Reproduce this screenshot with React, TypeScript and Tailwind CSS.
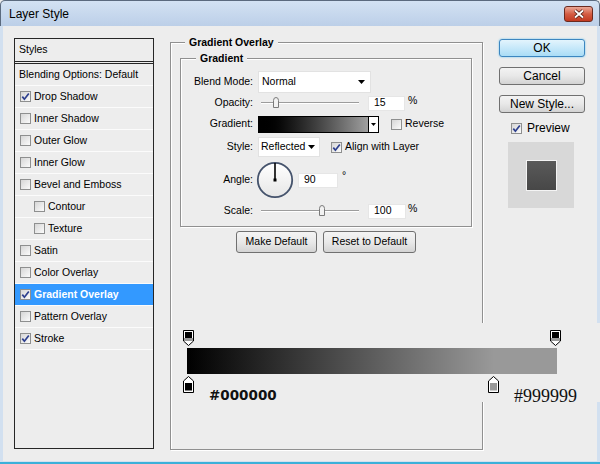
import React from "react"

type StyleItem = { name: string; on?: boolean; sub?: boolean; active?: boolean }

const styles: StyleItem[] = [
  { name: "Drop Shadow", on: true },
  { name: "Inner Shadow" },
  { name: "Outer Glow" },
  { name: "Inner Glow" },
  { name: "Bevel and Emboss" },
  { name: "Contour", sub: true },
  { name: "Texture", sub: true },
  { name: "Satin" },
  { name: "Color Overlay" },
  { name: "Gradient Overlay", on: true, active: true },
  { name: "Pattern Overlay" },
  { name: "Stroke", on: true },
]

const Check = ({ on }: { on?: boolean }) => (
  <span className="w-[11px] h-[11px] shrink-0 border border-[#8e8f8f] bg-gradient-to-br from-[#d6d6d6] to-[#fbfbfb] flex items-center justify-center">
    {on && (
      <svg width="9" height="9" viewBox="0 0 9 9">
        <path d="M1.3 4.6 L3.4 7.2 L7.8 1.4" fill="none" stroke="#2d3f8e" strokeWidth="1.7" />
      </svg>
    )}
  </span>
)

const Arrow = () => (
  <svg width="7" height="4" viewBox="0 0 7 4">
    <path d="M0 0 H7 L3.5 4 Z" fill="#000" />
  </svg>
)

const Thumb = () => (
  <svg width="8" height="11" viewBox="0 0 8 11">
    <path d="M1.5 10.5 V3.5 Q1.5 0.5 4 0.5 Q6.5 0.5 6.5 3.5 V10.5 Z" fill="#f2f2f2" stroke="#7a7a7a" />
  </svg>
)

const Slider = ({ at }: { at: number }) => (
  <div className="relative ml-[3px] w-[98px] h-[2px] border-t border-[#9c9c9c] bg-white">
    <div className="absolute top-[-6px]" style={{ left: at }}>
      <Thumb />
    </div>
  </div>
)

const Field = ({ value, w }: { value: string; w: string }) => (
  <div className={`${w} h-[15px] bg-white border border-[#e6e6e6] pl-[5px] flex items-center text-[10.5px]`}>{value}</div>
)

const Label = ({ children }: { children: React.ReactNode }) => (
  <div className="w-[72px] shrink-0 text-right pr-[0px] mr-[5px] text-[10.5px]">{children}</div>
)

const GrayButton = ({ children, w }: { children: React.ReactNode; w: string }) => (
  <div className={`${w} h-[22px] flex items-center justify-center rounded-[3px] border border-[#707070] bg-gradient-to-b from-[#f4f4f4] via-[#e9e9e9] to-[#d4d4d4] text-[10.5px]`}>
    {children}
  </div>
)

const BigButton = ({ children, focus }: { children: React.ReactNode; focus?: boolean }) => (
  <div
    className={
      focus
        ? "w-[86px] h-[18px] flex items-center justify-center rounded-[3px] border border-[#3c86c0] bg-gradient-to-b from-[#e3f4fd] to-[#a9dcf6] shadow-[0_0_2px_#5fc2f0] text-[12px]"
        : "w-[86px] h-[18px] flex items-center justify-center rounded-[3px] border border-[#707070] bg-gradient-to-b from-[#f3f3f3] via-[#e8e8e8] to-[#d3d3d3] text-[12px]"
    }
  >
    {children}
  </div>
)

const TopStop = () => (
  <svg width="11" height="16" viewBox="0 0 11 16">
    <path d="M0.5 0.5 H10.5 V11 L5.5 15.5 L0.5 11 Z" fill="#fff" stroke="#000" />
    <rect x="2" y="2" width="7" height="6" fill="#000" />
    <rect x="1" y="8" width="9" height="3" fill="#9a9a9a" />
  </svg>
)

const BottomStop = ({ color }: { color: string }) => (
  <svg width="11" height="17" viewBox="0 0 11 17">
    <path d="M5.5 0.5 L10.5 5 V16.5 H0.5 V5 Z" fill="#fff" stroke="#000" />
    <rect x="2" y="7" width="7" height="7.5" fill={color} />
  </svg>
)

const TitleBar = () => (
  <div className="h-[26px] shrink-0 flex items-center justify-between pl-[8px] pr-[6px] rounded-t-[5px] border-t border-x border-[#5b6a7e] bg-gradient-to-b from-[#d3e2f3] to-[#bccfe8]">
    <span className="text-[12px] text-black">Layer Style</span>
    <div className="self-start mt-[5px] w-[29px] h-[16px] rounded-[3px] border border-[#6b2a1f] bg-gradient-to-b from-[#e9a796] via-[#d45c43] to-[#c2391f] flex items-center justify-center">
      <svg width="12" height="10" viewBox="0 0 12 10">
        <path d="M2 1.5 L10 8.5 M10 1.5 L2 8.5" stroke="#4a1a12" strokeWidth="3.4" />
        <path d="M2 1.5 L10 8.5 M10 1.5 L2 8.5" stroke="#fff" strokeWidth="1.8" />
      </svg>
    </div>
  </div>
)

const StyleList = () => (
  <div className="w-[140px] h-[411px] shrink-0 border border-[#262626] flex flex-col text-[10.5px]">
    <div className="h-[22px] flex items-center pl-[4px]">Styles</div>
    <div className="h-[3px] border-y border-[#262626]" />
    <div className="h-[22px] flex items-center pl-[4px] border-b border-[#fbfbfb]">Blending Options: Default</div>
    {styles.map((s) => (
      <div
        key={s.name}
        className={`h-[22px] flex items-center gap-[3px] border-b border-[#fbfbfb] ${s.sub ? "pl-[19px]" : "pl-[5px]"} ${
          s.active ? "bg-[#3399ff] text-white font-bold" : ""
        }`}
      >
        <Check on={s.on} />
        <span>{s.name}</span>
      </div>
    ))}
  </div>
)

const GradientPanel = () => (
  <div className="relative ml-[16px] mt-[4px] w-[313px] h-[408px] shrink-0 border border-[#909090] shadow-[1px_1px_0_#fff,inset_1px_1px_0_#fff]">
    <span className="absolute left-[14px] top-[-7px] px-[4px] bg-[#ededed] text-[10.5px] font-bold leading-[13px]">Gradient Overlay</span>
    <div className="relative ml-[9px] mt-[15px] w-[292px] h-[169px] border border-[#909090] shadow-[1px_1px_0_#fff,inset_1px_1px_0_#fff] pt-[12px] flex flex-col">
      <span className="absolute left-[15px] top-[-7px] px-[4px] bg-[#ededed] text-[10.5px] font-bold leading-[13px]">Gradient</span>

      <div className="h-[22px] flex items-center">
        <Label>Blend Mode:</Label>
        <div className="w-[113px] h-[22px] bg-white border border-[#e2e2e2] flex items-center justify-between pl-[3px] pr-[5px] text-[10.5px]">
          <span>Normal</span>
          <Arrow />
        </div>
      </div>

      <div className="h-[20px] flex items-center">
        <Label>Opacity:</Label>
        <Slider at={11} />
        <div className="ml-[9px]">
          <Field value="15" w="w-[37px]" />
        </div>
        <span className="ml-[3px] mt-[-4px] text-[10.5px]">%</span>
      </div>

      <div className="h-[22px] flex items-center">
        <Label>Gradient:</Label>
        <div className="w-[121px] h-[17px] border border-black flex">
          <div className="flex-1 bg-gradient-to-r from-black to-[#a0a0a0]" />
          <div className="w-[10px] border-l border-black bg-white flex items-center justify-center">
            <svg width="5" height="3" viewBox="0 0 5 3">
              <path d="M0 0 H5 L2.5 3 Z" fill="#000" />
            </svg>
          </div>
        </div>
        <div className="ml-[12px] flex items-center gap-[3px] text-[10.5px]">
          <Check />
          <span>Reverse</span>
        </div>
      </div>

      <div className="h-[24px] flex items-center">
        <Label>Style:</Label>
        <div className="w-[62px] h-[20px] bg-white border border-[#e2e2e2] flex items-center justify-between pl-[2px] pr-[4px] text-[10.5px]">
          <span>Reflected</span>
          <Arrow />
        </div>
        <div className="ml-[11px] flex items-center gap-[3px] text-[10.5px]">
          <Check on />
          <span>Align with Layer</span>
        </div>
      </div>

      <div className="h-[42px] flex items-center">
        <Label>Angle:</Label>
        <svg width="38" height="38" viewBox="0 0 38 38" className="ml-[-2px]">
          <defs>
            <linearGradient id="dial" x1="0" y1="0" x2="0" y2="1">
              <stop offset="0" stopColor="#ffffff" />
              <stop offset="1" stopColor="#e6e6e6" />
            </linearGradient>
          </defs>
          <circle cx="19" cy="19" r="17.2" fill="url(#dial)" stroke="#45536c" strokeWidth="1.8" />
          <line x1="19" y1="2" x2="19" y2="19" stroke="#000" strokeWidth="1.6" />
          <rect x="17.5" y="17.5" width="3" height="3" fill="#000" />
        </svg>
        <div className="ml-[4px]">
          <Field value="90" w="w-[40px]" />
        </div>
        <span className="ml-[4px] mt-[-8px] text-[10.5px]">°</span>
      </div>

      <div className="h-[20px] flex items-center">
        <Label>Scale:</Label>
        <Slider at={57} />
        <div className="ml-[9px]">
          <Field value="100" w="w-[38px]" />
        </div>
        <span className="ml-[2px] mt-[-4px] text-[10.5px]">%</span>
      </div>
    </div>

    <div className="ml-[9px] mt-[4px] w-[292px] flex justify-center gap-[6px]">
      <GrayButton w="w-[81px]">Make Default</GrayButton>
      <GrayButton w="w-[93px]">Reset to Default</GrayButton>
    </div>
  </div>
)

const RightColumn = () => (
  <div className="ml-[16px] mt-[1px] w-[86px] shrink-0 flex flex-col">
    <BigButton focus>OK</BigButton>
    <div className="mt-[10px]">
      <BigButton>Cancel</BigButton>
    </div>
    <div className="mt-[10px]">
      <BigButton>New Style...</BigButton>
    </div>
    <div className="mt-[8px] h-[14px] ml-[12px] flex items-center gap-[5px] text-[12px]">
      <Check on />
      <span>Preview</span>
    </div>
    <div className="mt-[7px] ml-[9px] w-[66px] h-[66px] bg-[#d8d8d8] flex items-center justify-center">
      <div className="w-[31px] h-[31px] border border-[#f4f4f4] bg-gradient-to-b from-[#5a5a5a] to-[#474747]" />
    </div>
  </div>
)

const GradientEditor = () => (
  <div className="absolute left-[175px] top-[323px] w-[425px] h-[79px] bg-[#ededed] pl-[8px] pt-[7px] flex flex-col">
    <div className="w-[378px] flex justify-between">
      <TopStop />
      <TopStop />
    </div>
    <div className="ml-[4px] mt-[2px] w-[370px] h-[26px] bg-[linear-gradient(to_right,#000_0%,#999_83%,#999_100%)]" />
    <div className="relative mt-[2px] h-[26px]">
      <div className="absolute left-0 top-0">
        <BottomStop color="#000" />
      </div>
      <div className="absolute left-[305px] top-0">
        <BottomStop color="#999" />
      </div>
      <span className="absolute left-[26px] top-[11px] font-['DejaVu_Sans',sans-serif] font-bold text-[13.5px] leading-[16px] text-[#111]">
        #000000
      </span>
      <span className="absolute left-[331px] top-[10px] font-['Liberation_Serif',serif] text-[18px] leading-[20px] text-[#111]">
        #999999
      </span>
    </div>
  </div>
)

export default function App() {
  return (
    <div className="relative w-[600px] h-[464px] flex flex-col overflow-hidden bg-[#ededed] font-['Liberation_Sans',Arial,sans-serif] text-black border-b-2 border-[#3bb0d9]">
      <TitleBar />
      <div className="flex-1 flex items-start border-x-[3px] border-b border-[#d2e0f0] pl-[11px] pt-[12px]">
        <StyleList />
        <GradientPanel />
        <RightColumn />
      </div>
      <GradientEditor />
    </div>
  )
}
